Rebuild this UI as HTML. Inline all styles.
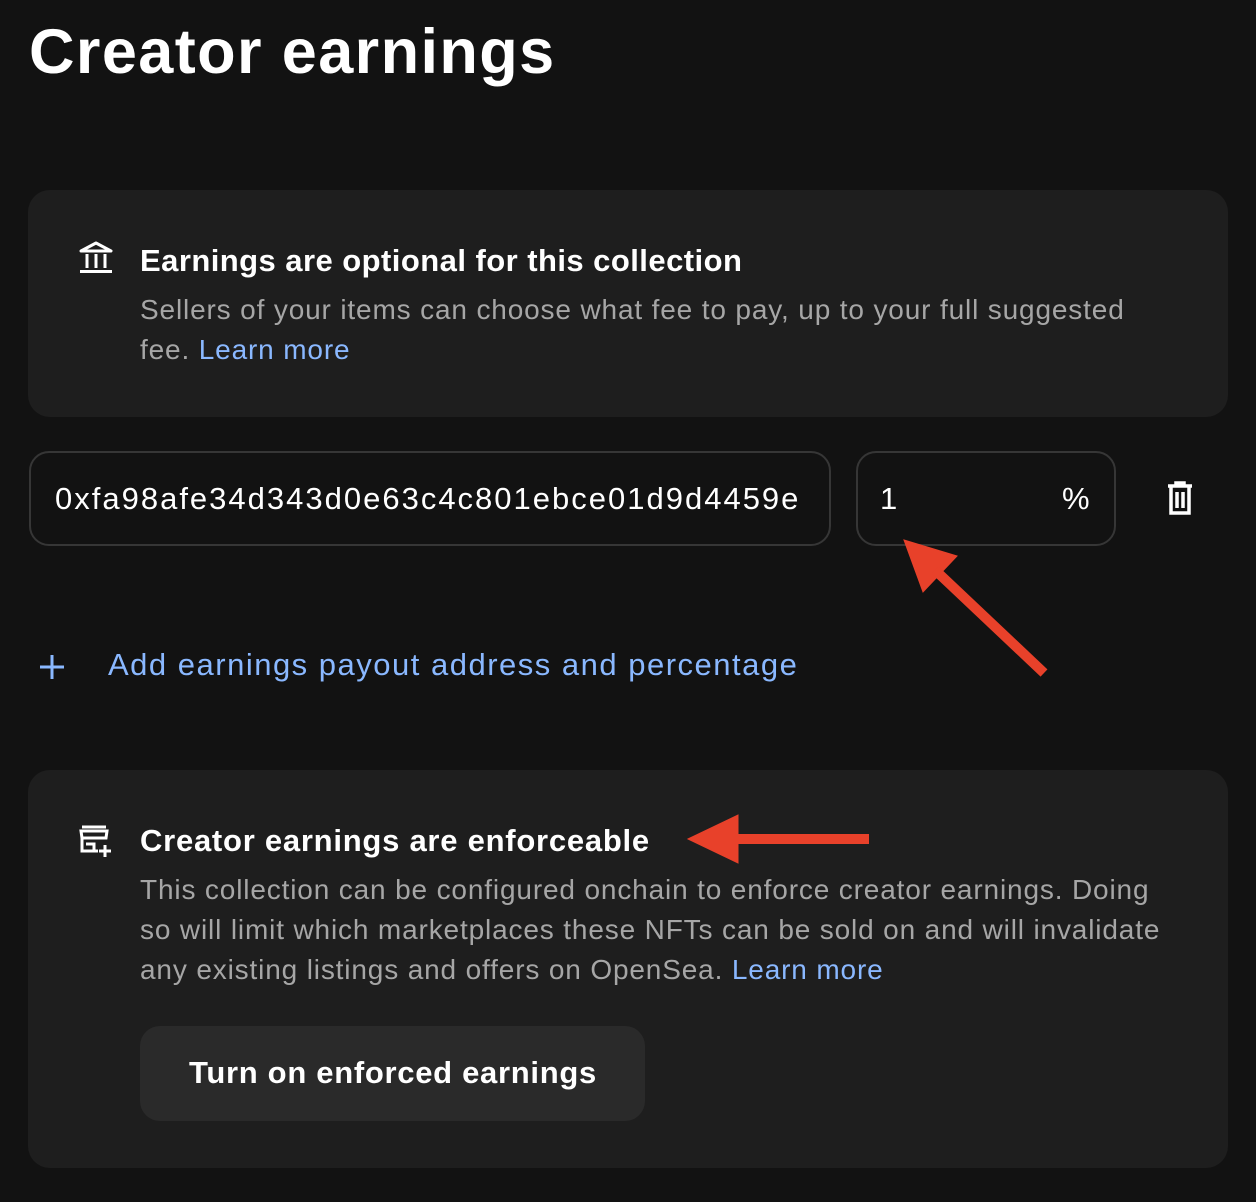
<!DOCTYPE html>
<html><head><meta charset="utf-8"><style>
*{margin:0;padding:0;box-sizing:border-box}
body{width:1256px;height:1202px;background:#121212;font-family:"Liberation Sans",sans-serif;color:#fff;position:relative;overflow:hidden}
.a{position:absolute;white-space:nowrap}
h1{position:absolute;left:29px;top:16px;font-size:63px;font-weight:bold;letter-spacing:1.4px}
.card{position:absolute;left:28px;width:1200px;background:#1e1e1e;border-radius:22px}
.h{font-size:31px;font-weight:bold}
.p{font-size:28px;color:#a6a6a6;line-height:40px;letter-spacing:0.85px}
.l{color:#8ab8ff}
.inp{position:absolute;top:451px;height:95px;border:2px solid #363636;border-radius:20px;font-size:31px}
</style></head><body>
<h1>Creator earnings</h1>
<div class="card" style="top:190px;height:227px"></div>
<svg class="a" style="left:78px;top:240px" width="36" height="34" viewBox="0 0 36 34" fill="none" stroke="#fff" stroke-width="3"><path d="M3 11 L18 3 L33 11 Z" stroke-linejoin="round"/><path d="M9 14v14M18 14v14M27 14v14M2 31.5h32"/></svg>
<div class="a h" style="left:140px;top:243px;letter-spacing:0.45px">Earnings are optional for this collection</div>
<div class="a p" style="left:140px;top:290px">Sellers of your items can choose what fee to pay, up to your full suggested<br>fee. <span class="l">Learn more</span></div>
<div class="inp" style="left:29px;width:802px"><span class="a" style="left:24px;top:28px;letter-spacing:2px">0xfa98afe34d343d0e63c4c801ebce01d9d4459e</span></div>
<div class="inp" style="left:856px;width:260px"><span class="a" style="left:22px;top:28px">1</span><span class="a" style="left:204px;top:28px">%</span></div>
<svg class="a" style="left:1164px;top:480px" width="32" height="36" viewBox="0 0 32 36" fill="none" stroke="#fff" stroke-width="3.5"><path d="M4 6h24M12 6V3h8v3M7 7v26h18V7M13 12v16M19 12v16"/></svg>
<svg class="a" style="left:38px;top:653px" width="28" height="28" viewBox="0 0 28 28" stroke="#8ab8ff" stroke-width="3"><path d="M14 2v24M2 14h24"/></svg>
<div class="a" style="left:108px;top:647px;font-size:31px;color:#8ab8ff;letter-spacing:1.5px">Add earnings payout address and percentage</div>
<div class="card" style="top:770px;height:398px"></div>
<svg class="a" style="left:78px;top:825px" width="38" height="36" viewBox="0 0 38 36" fill="none" stroke="#fff" stroke-width="3"><path d="M4 2h24M3 6h26l-1 7H4z"/><path d="M4 13v13h16M8 19h8v7"/><path d="M27 20v12M21 26h12" stroke-width="3"/></svg>
<div class="a h" style="left:140px;top:823px;letter-spacing:0.75px">Creator earnings are enforceable</div>
<div class="a p" style="left:140px;top:870px">This collection can be configured onchain to enforce creator earnings. Doing<br>so will limit which marketplaces these NFTs can be sold on and will invalidate<br>any existing listings and offers on OpenSea. <span class="l">Learn more</span></div>
<div class="a" style="left:140px;top:1026px;width:505px;height:95px;background:#2a2a2a;border-radius:20px"></div>
<div class="a h" style="left:189px;top:1055px;letter-spacing:0.7px">Turn on enforced earnings</div>
<svg class="a" style="left:0;top:0" width="1256" height="1202"><g fill="#e8412a" stroke="#e8412a"><polygon points="904,540 957,556 923,592"/><line x1="935" y1="570" x2="1044" y2="673" stroke-width="10"/><polygon points="688,839 738,815 738,863"/><line x1="730" y1="839" x2="869" y2="839" stroke-width="10"/></g></svg>
</body></html>
